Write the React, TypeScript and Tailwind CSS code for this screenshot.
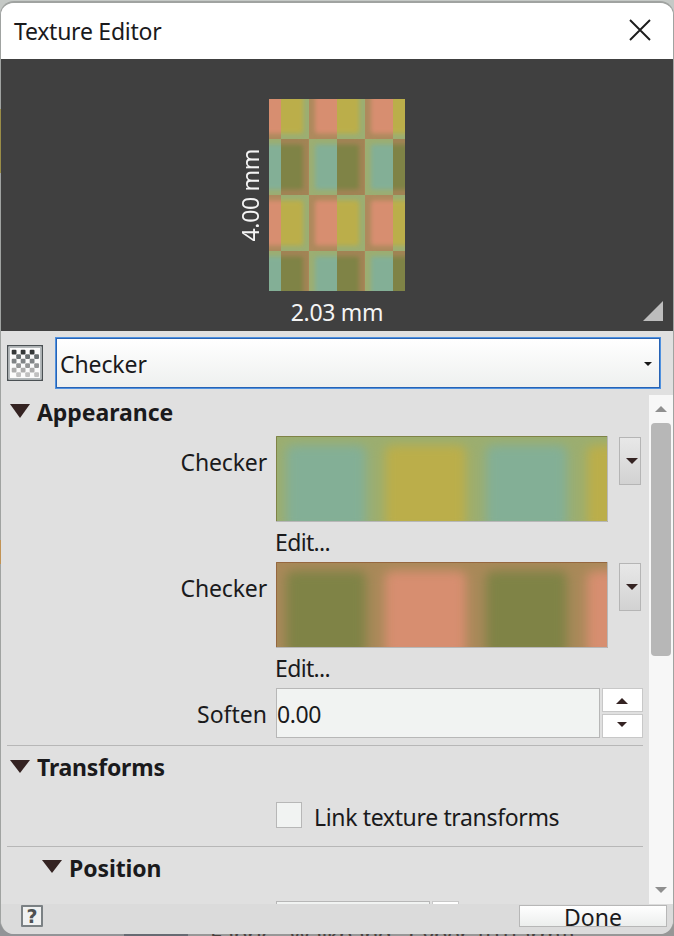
import React from "react";

type Palette = { base: string; first: string; second: string; edge: string };

const green: Palette = { base: "#9cae70", first: "#83af96", second: "#bbae4a", edge: "#7f8346" };
const brown: Palette = { base: "#a98959", first: "#7f8346", second: "#d78e70", edge: "#95673f" };

function Down({ className = "", w, h, fill = "#342322" }: { className?: string; w: number; h: number; fill?: string }) {
  return (
    <svg className={`block shrink-0 ${className}`} width={w} height={h} viewBox={`0 0 ${w} ${h}`}>
      <path d={`M0 0H${w}L${w / 2} ${h}Z`} fill={fill} />
    </svg>
  );
}

function Up({ className = "", w, h, fill = "#342322" }: { className?: string; w: number; h: number; fill?: string }) {
  return (
    <svg className={`block shrink-0 ${className}`} width={w} height={h} viewBox={`0 0 ${w} ${h}`}>
      <path d={`M0 ${h}H${w}L${w / 2} 0Z`} fill={fill} />
    </svg>
  );
}

function Preview() {
  const cells: React.ReactNode[] = [];
  for (let r = 0; r < 4; r++) {
    for (let c = 0; c < 6; c++) {
      const left = c % 2 === 0;
      const lightRow = r % 2 === 0;
      const fill = lightRow ? (left ? brown.second : green.second) : left ? green.first : brown.first;
      const isBrown = fill === brown.second || fill === brown.first;
      const base = isBrown ? (fill === brown.first ? "#a28455" : "#ae8a5d") : "#9cae72";
      cells.push(
        <svg key={`${r}-${c}`} x={-16 + c * 28} y={-16 + r * 56} width="28" height="56" overflow="hidden">
          <rect width="28" height="56" fill={base} />
          <rect x={left ? 6 : -12} y="5.5" width="34" height="45" rx="3" fill={fill} filter="url(#cellSoft)" />
          {!left && !lightRow && <rect x="27" width="1" height="56" fill="#a98658" />}
        </svg>
      );
    }
  }
  return (
    <svg width="136" height="192" viewBox="0 0 136 192" className="block">
      <defs>
        <filter id="cellSoft" x="-50%" y="-50%" width="200%" height="200%" colorInterpolationFilters="sRGB">
          <feGaussianBlur stdDeviation="2.1" />
        </filter>
      </defs>
      {cells}
    </svg>
  );
}

function Swatch({ id, p }: { id: string; p: Palette }) {
  return (
    <svg width="332" height="86" viewBox="0 0 332 86" className="block shrink-0">
      <defs>
        <filter id={id} x="-30%" y="-30%" width="160%" height="160%" colorInterpolationFilters="sRGB">
          <feGaussianBlur stdDeviation="5.5" />
        </filter>
      </defs>
      <rect width="332" height="86" fill={p.base} />
      <g filter={`url(#${id})`}>
        <rect x="10" y="9" width="80" height="86" rx="7" fill={p.first} />
        <rect x="109" y="9" width="81" height="86" rx="7" fill={p.second} />
        <rect x="210" y="9" width="81" height="86" rx="7" fill={p.first} />
        <rect x="311" y="9" width="70" height="86" rx="7" fill={p.second} />
      </g>
      <path d="M0.5 86V0.5H331" fill="none" stroke={p.edge} />
      <path d="M331.5 0V85.5H0" fill="none" stroke="#b7b7b7" />
    </svg>
  );
}

function TextureRow({ id, p }: { id: string; p: Palette }) {
  return (
    <div className="flex h-[126px] items-start">
      <div className="w-[266px] pt-[9px] text-right leading-[34px] tracking-[-0.15px]">Checker</div>
      <div className="ml-[9px] w-[332px]">
        <Swatch id={id} p={p} />
        <div className="-ml-px h-10 pt-[3px] leading-[34px] tracking-[-0.65px]">Edit...</div>
      </div>
      <button className="ml-[11px] mt-px flex h-12 w-[22px] shrink-0 items-center justify-center border border-[#b5b5b5] bg-linear-to-b from-[#e8e8e8] to-[#d2d2d2] pl-[3px]">
        <Down w={12} h={6} />
      </button>
    </div>
  );
}

function CheckerIcon() {
  const dots: React.ReactNode[] = [];
  for (let r = 0; r < 6; r++)
    for (let c = 0; c < 3; c++)
      dots.push(
        <rect
          key={`${r}${c}`}
          x={4.7 + c * 9 + (r % 2) * 4.5}
          y={4.7 + r * 4.5}
          width="4.8"
          height="4.8"
          rx="1"
          fill={["#353739", "#6a7072", "#7f8385", "#949697", "#acacac", "#c0c0c0"][r]}
        />
      );
  return (
    <svg width="36" height="36" viewBox="0 0 36 36" className="mt-[14px] block shrink-0">
      <defs>
        <filter id="dotSoft"><feGaussianBlur stdDeviation="0.7" /></filter>
      </defs>
      <rect x="0.75" y="0.75" width="34.5" height="34.5" fill="#fbfbfb" stroke="#4b5154" strokeWidth="1.5" />
      <rect x="2.25" y="2.25" width="31.5" height="31.5" fill="none" stroke="#b4b9bb" strokeWidth="1.5" />
      <g filter="url(#dotSoft)">{dots}</g>
    </svg>
  );
}

export default function App() {
  return (
    <div className="relative h-[936px] w-[674px] overflow-hidden bg-[#a7aaa9] font-['Noto_Sans','Open_Sans',sans-serif] text-[23px] text-[#1a1a1c]">
      <div className="absolute inset-0">
        <div className="h-[100px] bg-[#c5c9c6]" />
        <div className="absolute inset-x-0 bottom-0 h-4 bg-[#929497]">
          <div className="absolute bottom-0 left-[124px] h-full w-16 bg-[#666a72]" />
          <div className="absolute bottom-0 left-[190px] h-full w-[484px] overflow-hidden bg-[#979797]">
            <div className="ml-5 mt-[3px] whitespace-nowrap text-[23px] leading-6 tracking-[-0.65px] text-[#49423f]">Fabric - Walkband - Cyber 101[arm])</div>
          </div>
        </div>
      </div>

      <div className="relative mt-px flex h-[933px] flex-col overflow-hidden rounded-[14px] border-x border-t-2 border-[#a0a3a1] bg-[#e0e0e0]">
        <header className="flex h-14 shrink-0 items-center justify-between bg-white pl-[13px] pr-[22px]">
          <h1 className="tracking-[-0.25px]">Texture Editor</h1>
          <svg width="22" height="22" viewBox="0 0 22 22" className="mb-[2px] block">
            <path d="M1 1L21 21M21 1L1 21" stroke="#1c1c1c" strokeWidth="1.9" />
          </svg>
        </header>

        <section className="relative flex h-[272px] shrink-0 flex-col items-center bg-[#404040] pt-10 text-[#f4f4f4]">
          <div className="flex h-48 w-full">
            <div className="flex w-[268px] items-center justify-end pr-1">
              <span className="rotate-180 leading-[30px] tracking-[-0.3px] [writing-mode:vertical-rl]">4.00 mm</span>
            </div>
            <Preview />
          </div>
          <div className="mt-1 leading-[34px] tracking-[-0.3px]">2.03 mm</div>
          <svg className="absolute bottom-[10px] right-[10px]" width="20" height="20" viewBox="0 0 20 20">
            <path d="M20 0V20H0Z" fill="#bdbdbd" />
          </svg>
        </section>

        <div className="flex h-16 shrink-0 pl-[6px]">
          <CheckerIcon />
          <div className="ml-3 mt-[6px] flex h-[52px] w-[606px] border border-[#4f91df]">
            <div className="flex flex-1 items-center justify-between border border-[#2763b5] bg-linear-to-b from-white to-[#eef0ef] pl-[3px] pr-[7px]">
              <span className="pt-0.5 tracking-[-0.1px]">Checker</span>
              <Down w={8} h={4} fill="#171717" className="mt-px" />
            </div>
          </div>
        </div>

        <div className="flex h-[509px] shrink-0">
          <main className="h-full w-[648px] overflow-hidden">
            <div className="flex h-[41px] items-center pl-[9px] font-bold">
              <Down w={20} h={14} className="mb-[9px]" />
              <h2 className="mb-[7px] ml-[7px] tracking-[-0.05px]">Appearance</h2>
            </div>
            <TextureRow id="softGreen" p={green} />
            <TextureRow id="softBrown" p={brown} />
            <div className="flex h-[57px] items-start">
              <div className="w-[266px] pt-[9px] text-right leading-[34px]">Soften</div>
              <div className="ml-[9px] flex h-[50px] w-[324px] items-center border border-[#b7b7b7] bg-[#f1f3f2] pt-[3px] tracking-[-0.4px]">0.00</div>
              <div className="ml-[2px] flex w-[41px] flex-col gap-[2px]">
                <button className="flex h-6 items-center justify-center border border-[#c8c8c8] bg-white"><Up w={12} h={6} className="mr-px mt-0.5" /></button>
                <button className="flex h-6 items-center justify-center border border-[#c8c8c8] bg-white"><Down w={10} h={5} className="mb-[3px] mr-px" /></button>
              </div>
            </div>
            <div className="ml-[6px] flex h-[101px] w-[636px] flex-col border-t border-[#b7b7b7]">
              <div className="flex h-[45px] items-center pl-[3px] font-bold">
                <Down w={20} h={13} className="mb-[5px]" />
                <h2 className="mb-0.5 ml-[7px] tracking-[-0.2px]">Transforms</h2>
              </div>
              <label className="ml-[269px] flex items-start pt-[11px]">
                <span className="block size-[26px] border border-[#b7b7b7] bg-[#f1f3f2]" />
                <span className="-mt-0.5 ml-3 leading-[34px] tracking-[-0.35px]">Link texture transforms</span>
              </label>
            </div>
            <div className="ml-[6px] w-[636px] border-t border-[#b7b7b7]">
              <div className="flex h-[54px] items-start pl-[35px] font-bold">
                <Down w={20} h={13} className="mt-[13px]" />
                <h2 className="ml-[7px] mt-1 leading-[34px] tracking-[-0.1px]">Position</h2>
              </div>
              <div className="ml-[269px] flex gap-[2px]">
                <div className="h-[50px] w-[154px] border border-[#b7b7b7] bg-[#f1f3f2]" />
                <div className="h-6 w-[27px] border border-[#c8c8c8] bg-white" />
              </div>
            </div>
          </main>
          <aside className="flex w-6 flex-col items-center bg-[#f7f7f7] pt-[11px]">
            <Up w={12} h={6} fill="#8f8f8f" />
            <div className="mt-[11px] h-[233px] w-5 rounded-[4px] bg-[#b7b7b7]" />
            <div className="mt-auto pb-[11px]"><Down w={12} h={6} fill="#8f8f8f" /></div>
          </aside>
        </div>

        <footer className="flex h-[30px] shrink-0 items-start justify-between bg-[#dbdbdb] pl-5 pr-[6px] pt-px">
          <span className="flex size-[22px] items-center justify-center rounded-[1px] border-2 border-[#7b8184] bg-[#f0f1f1] font-['DejaVu_Sans',sans-serif] text-[19px] font-bold leading-none text-[#4e5153]">?</span>
          <button className="flex h-[22px] w-[148px] items-center justify-center overflow-hidden border border-[#b7b7b7] bg-linear-to-b from-white to-[#eceeed] leading-none">
            <span className="pt-[3px]">Done</span>
          </button>
        </footer>
      </div>

      <div className="absolute left-0 top-[109px] h-16 w-px bg-[#9a8d47]" />
      <div className="absolute left-0 top-[540px] h-6 w-px bg-[#c29354]" />
    </div>
  );
}
